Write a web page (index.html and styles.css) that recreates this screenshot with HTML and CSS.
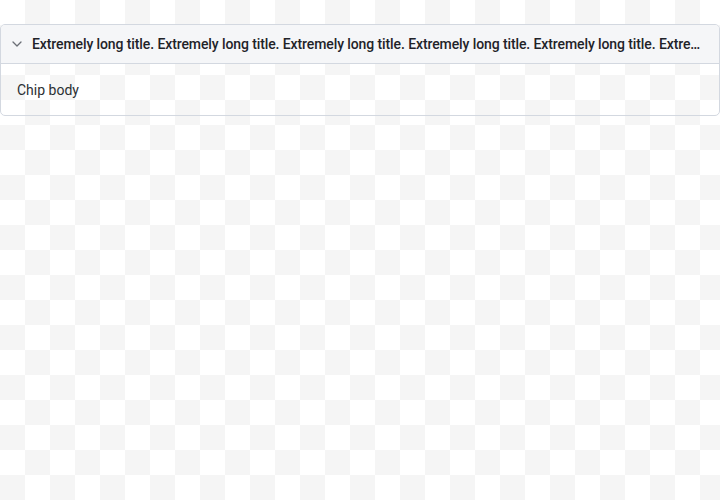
FILE: index.html
```html
<!DOCTYPE html>
<html>
<head>
<meta charset="utf-8">
<link rel="stylesheet" href="styles.css">
</head>
<body>
<div class="chip">
  <div class="chip-header">
    <svg class="chevron" width="10" height="6" viewBox="0 0 10 6"><path d="M1 1l4 4 4-4" fill="none" stroke="#6b6f76" stroke-width="1.3" stroke-linecap="round" stroke-linejoin="round"/></svg>
    <span class="chip-title">Extremely long title. Extremely long title. Extremely long title. Extremely long title. Extremely long title. Extremely long title. Extremely long title.</span>
  </div>
  <div class="chip-body">Chip body</div>
</div>
</body>
</html>
```
FILE: styles.css
```css
html, body {
  margin: 0;
  height: 100%;
}
body {
  padding-top: 24px;
  box-sizing: border-box;
  font-family: Roboto, "Liberation Sans", sans-serif;
  background-color: #ffffff;
  background-image: conic-gradient(#f5f5f5 0deg 90deg, #ffffff 90deg 180deg, #f5f5f5 180deg 270deg, #ffffff 270deg 360deg);
  background-size: 50px 50px;
  background-position: 0 0;
}
.chip {
  border: 1px solid #d3d8e0;
  border-radius: 5px;
  overflow: hidden;
}
.chip-header {
  display: flex;
  align-items: center;
  height: 38px;
  padding: 0 13px 0 11px;
  background: #f5f6f8;
  border-bottom: 1px solid #d3d8e0;
}
.chevron {
  flex: none;
  width: 10px;
  margin-right: 10px;
}
.chip-title {
  flex: 1;
  min-width: 0;
  white-space: nowrap;
  overflow: hidden;
  text-overflow: ellipsis;
  font-size: 14px;
  font-weight: 500;
  letter-spacing: -0.1px;
  color: #1f2329;
}
.chip-body {
  padding: 17px 16px 16px 16px;
  font-size: 14px;
  line-height: 18px;
  color: #2b2f33;
}
```
